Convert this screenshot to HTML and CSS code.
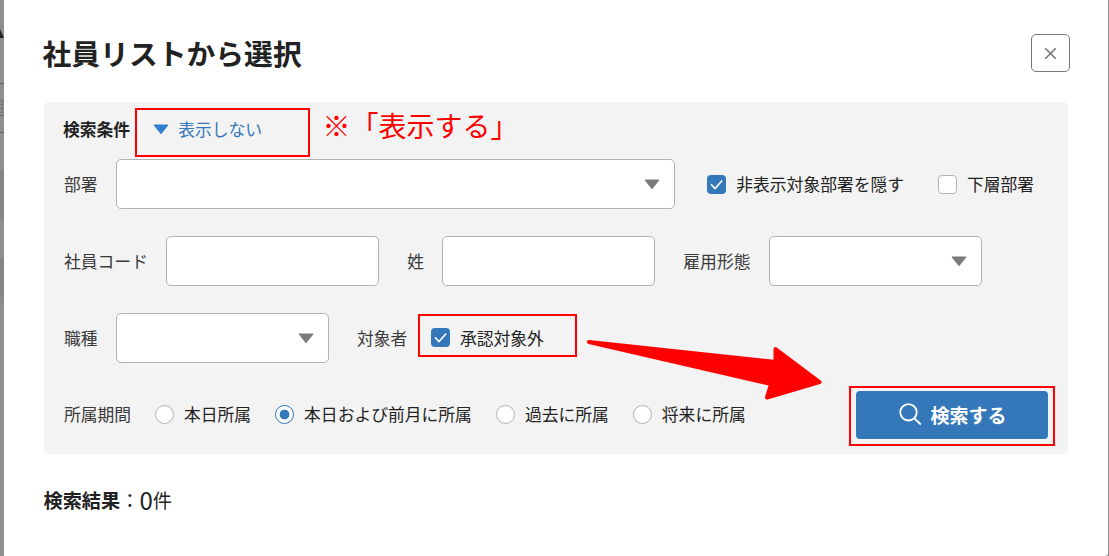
FILE: index.html
```
<!DOCTYPE html>
<html lang="ja">
<head>
    <meta charset="UTF-8">
    <title>社員リストから選択</title>
    <link rel="stylesheet" href="styles.css">
</head>
<body>
<div class="page-bg">
    <svg width="4" height="556" viewBox="0 0 4 556">
        <path d="M0 29l4 9H0z" fill="#222"/>
        <path d="M0 170h4v50H0zM0 258h4v39H0z" fill="#858585"/>
        <path d="M0 83.500h4M0 115.500h4M0 132.500h4" stroke="#68686c"/>
        <path d="M0 100.500h4M0 104.500h3M0 108.500h3M0 112.500h4M2.500 100v12" stroke="#777"/>
    </svg>
</div>

<div class="modal">
    <div class="modal-head">
        <h1>社員リストから選択</h1>
        <button class="close" type="button" aria-label="閉じる">
            <svg width="13" height="13" viewBox="0 0 13 13"><path d="M1.200 1.200l10.600 10.600M11.800 1.200L1.200 11.800"/></svg>
        </button>
    </div>

    <div class="search">
        <div class="search-head">
            <h2>検索条件</h2>
            <a href="#" class="toggle">
                <svg width="16" height="11" viewBox="0 0 16 11"><path d="M1 1h14L8 9.800z"/></svg>表示しない
            </a>
        </div>

        <div class="row">
            <span class="label">部署</span>
            <div class="field select wide"><svg class="caret" width="16" height="11" viewBox="0 0 16 11"><path d="M1 1h14L8 9.800z"/></svg></div>
            <label class="choice dept"><span class="box on"><svg width="19" height="19" viewBox="0 0 19 19"><path d="M4 9.300l4 4.200 7.200-8"/></svg></span>非表示対象部署を隠す</label>
            <label class="choice lower"><span class="box"></span>下層部署</label>
        </div>

        <div class="row">
            <span class="label">社員コード</span>
            <div class="field"></div>
            <span class="label next">姓</span>
            <div class="field"></div>
            <span class="label next">雇用形態</span>
            <div class="field select"><svg class="caret" width="16" height="11" viewBox="0 0 16 11"><path d="M1 1h14L8 9.800z"/></svg></div>
        </div>

        <div class="row">
            <span class="label">職種</span>
            <div class="field select"><svg class="caret" width="16" height="11" viewBox="0 0 16 11"><path d="M1 1h14L8 9.800z"/></svg></div>
            <span class="label next">対象者</span>
            <label class="choice target"><span class="box on"><svg width="19" height="19" viewBox="0 0 19 19"><path d="M4 9.300l4 4.200 7.200-8"/></svg></span>承認対象外</label>
        </div>

        <div class="row period">
            <span class="label">所属期間</span>
            <div class="radios">
                <label class="choice"><span class="radio"></span>本日所属</label>
                <label class="choice"><span class="radio on"></span>本日および前月に所属</label>
                <label class="choice"><span class="radio"></span>過去に所属</label>
                <label class="choice"><span class="radio"></span>将来に所属</label>
            </div>
            <button class="submit" type="button">
                <svg width="23" height="23" viewBox="0 0 23 23"><circle cx="9.500" cy="9.300" r="8.200"/><path d="M15.400 15.300l6.400 6.200"/></svg>検索する
            </button>
        </div>
    </div>

    <p class="result"><b>検索結果</b>：<span class="count">0</span>件</p>
</div>

<!-- 説明用の赤枠と矢印 -->
<div class="mark mark-toggle"></div>
<div class="mark mark-target"></div>
<div class="mark mark-submit"></div>
<p class="note">※「表示する」</p>
<svg class="arrow" width="240" height="64" viewBox="0 0 240 64">
    <path d="M4 4L190.500 24V11L234.500 44L182 59.500L186 46z"/>
</svg>
</body>
</html>
```

FILE: styles.css
```
body,h1,h2,p,button{margin:0;padding:0}
body,button{font-family:"Noto Sans CJK JP", sans-serif;color:#222;}
body{
    height:556px;
    position:relative;
    overflow:hidden;
    background:#8f8e8c;
    font-size:16.8px;
    line-height:24px;
}
svg{display:block;flex:none;}
a{text-decoration:none}
.page-bg{
    position:absolute;
    left:0;
    top:0;
}
.modal{
    box-sizing:border-box;
    width:1104px;
    height:556px;
    margin-left:4px;
    padding:34px 38px 0 40px;
    background:#fff;
    border-bottom-right-radius:3px;
}
.modal-head{
    display:flex;
    justify-content:space-between;
    height:68px;
}
.modal-head h1{
    margin-left:-1.5px;
    font-size:28.8px;
    line-height:38px;
}
.close{
    display:flex;
    align-items:center;
    justify-content:center;
    width:39px;
    height:38px;
    background:#fff;
    border:1px solid #777;
    border-radius:5px;
}
.close path{
    fill:none;
    stroke:#777;
    stroke-width:1.6;
}
/* 検索条件 */
.search{
    box-sizing:border-box;
    width:1024px;
    height:352px;
    padding:9px 20px 0 19px;
    background:#f3f3f3;
    border-radius:5px;
}
.search-head{
    display:flex;
    align-items:center;
    height:36px;
    margin-bottom:12px;
}
.search-head h2{
    font-size:16.8px;
}
.toggle{
    display:flex;
    align-items:center;
    gap:9px;
    margin-left:23px;
    color:#3478ba;
}
.toggle path{
    fill:#307fd0;
    stroke:#307fd0;
    stroke-linejoin:round;
}
.row{
    display:flex;
    align-items:center;
    height:50px;
    margin-bottom:27px;
    padding-left:1px;
    white-space:nowrap;
}
.label{
    margin-right:18.3px;
    color:#3a3a3a;
}
.next{
    margin-left:28px;
}
.field{
    box-sizing:border-box;
    width:213px;
    height:50px;
    background:#fff;
    border:1px solid #aeb4bd;
    border-radius:5px;
}
.wide{
    width:559px;
}
.select{
    display:flex;
    align-items:center;
    justify-content:flex-end;
    padding-right:14px;
}
.caret path{
    fill:#7b7b7b;
    stroke:#7b7b7b;
    stroke-linejoin:round;
}
.choice{
    display:flex;
    align-items:center;
    gap:10.4px;
}
.dept{margin-left:32px;}
.lower{margin-left:33.5px;}
.target{margin-left:5px;}
.box,.radio{
    box-sizing:border-box;
    width:19px;
    height:19px;
    background:#fff;
    border:1px solid #aeb4bd;
    border-radius:4px;
}
.box.on{
    background:#3478ba;
    border:0;
}
.box path{
    fill:none;
    stroke:#fff;
    stroke-width:1.6;
}
.target .box{
    margin-top:-1px;
}
.radio{
    border-radius:50%;
}
.radio.on{
    border-color:#3478ba;
    background:radial-gradient(circle, #3478ba 4.5px, #fff 5.2px);
}
.period{
    line-height:22px;
}
.period .label{
    margin-top:-2px;
}
.radios{
    display:flex;
    gap:24px;
    margin-left:5.5px;
    margin-top:-2px;
}
.radios .choice{
    gap:10px;
}
.submit{
    display:flex;
    align-items:center;
    justify-content:center;
    gap:8px;
    box-sizing:border-box;
    width:192px;
    height:48px;
    margin-left:auto;
    padding:0 0 2px 2px;
    background:#3478ba;
    border:0;
    border-radius:4px;
    color:#fff;
    font-size:19px;
    font-weight:bold;
}
.submit svg{
    fill:none;
    stroke:#fff;
    stroke-width:1.8;
}
.result{
    display:flex;
    align-items:center;
    margin-top:34px;
    margin-left:-.5px;
    font-size:19.2px;
}
.count{
    font-size:24px;
}
/* 注釈 */
.mark{
    box-sizing:border-box;
    position:absolute;
    border:2px solid #f00;
}
.mark-toggle{left:135px;top:108px;width:175px;height:49px;}
.mark-target{left:418px;top:314px;width:159px;height:43px;}
.mark-submit{left:849px;top:386px;width:206px;height:60px;}
.note{
    position:absolute;
    left:322.5px;
    top:105px;
    color:#f00;
    font-size:28px;
    line-height:40px;
    white-space:nowrap;
}
.arrow{
    position:absolute;
    left:585px;
    top:338px;
}
.arrow path{
    fill:#f00;
    stroke:#f00;
    stroke-width:4;
    stroke-linejoin:round;
}
```
